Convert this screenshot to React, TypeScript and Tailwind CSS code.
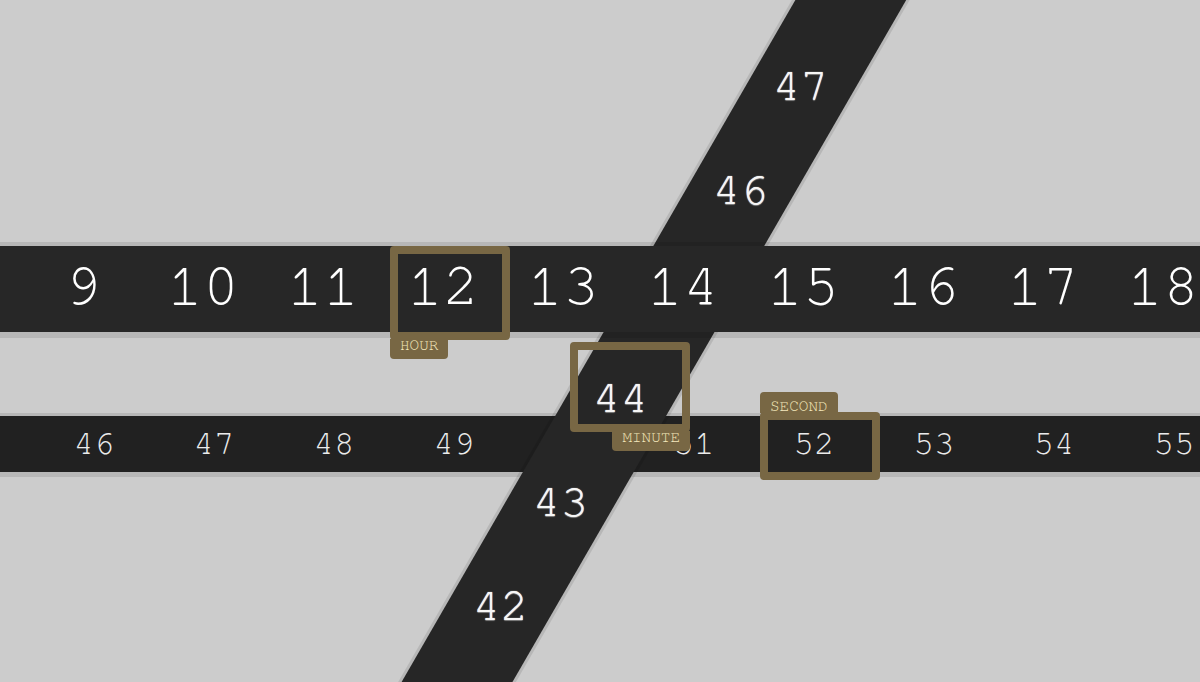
import React from 'react';

const range = (from: number, to: number) => {
  const out: number[] = [];
  if (from <= to) for (let i = from; i <= to; i++) out.push(i);
  else for (let i = from; i >= to; i--) out.push(i);
  return out;
};

const mono = "font-['Nimbus_Mono_PS','Nimbus_Mono_L','FreeMono','Courier','Liberation_Mono',monospace]";

export default function App() {
  const hours = range(8, 19);
  const seconds = range(45, 56);
  const minutes = range(49, 39);

  return (
    <div className={`relative w-[1200px] h-[682px] overflow-hidden bg-[#cccccc] ${mono}`}>
      {/* seconds strip */}
      <div className="absolute left-0 right-0 top-[416px] h-[56px] bg-[#212121] shadow-[0_1px_0_4px_rgba(0,0,0,0.1)]">
        <div className="flex h-full -ml-[86px]">
          {seconds.map((s) => (
            <div key={s} className="w-[120px] shrink-0 flex items-center justify-center text-[34px] text-[#ebebeb]">
              {s}
            </div>
          ))}
        </div>
      </div>

      {/* minutes strip, tilted */}
      <div className="absolute left-[573px] top-[-262px] w-[96px] h-[1320px] rotate-[30deg] bg-[#262626] shadow-[0_0_0_3px_rgba(0,0,0,0.1)]">
        <div className="flex flex-col h-full">
          {minutes.map((m) => (
            <div key={m} className="h-[120px] shrink-0 flex items-center justify-center">
              <span className="-rotate-[30deg] text-[46px] text-[#f6f6f6] [text-shadow:0_0_1px_#fff,0_1px_1px_rgba(255,255,255,0.35)]">
                {m}
              </span>
            </div>
          ))}
        </div>
      </div>

      {/* hours strip */}
      <div className="absolute left-0 right-0 top-[246px] h-[86px] bg-[#272727] shadow-[0_1px_0_5px_rgba(0,0,0,0.1)]">
        <div className="flex h-full -ml-[97px]">
          {hours.map((h) => (
            <div key={h} className="w-[120px] shrink-0 flex items-center justify-center pb-[6px] text-[60px] text-white">
              {h}
            </div>
          ))}
        </div>
      </div>

      {/* hour marker */}
      <div className="absolute left-[390px] top-[246px] flex flex-col items-start">
        <div className="w-[120px] h-[94px] border-[8px] border-[#786744] rounded-[4px]" />
        <div className="h-[20px] px-[10px] -mt-px bg-[#786744] rounded-b-[4px] text-[16px] leading-[12px] text-[#f5e9bd]">
          HOUR
        </div>
      </div>

      {/* minute marker */}
      <div className="absolute left-[570px] top-[342px] flex flex-col items-end">
        <div className="w-[120px] h-[90px] border-[8px] border-[#786744] rounded-[4px]" />
        <div className="h-[20px] px-[10px] -mt-px bg-[#786744] rounded-b-[4px] text-[16px] leading-[12px] text-[#f5e9bd]">
          MINUTE
        </div>
      </div>

      {/* second marker */}
      <div className="absolute left-[760px] top-[392px] flex flex-col items-start">
        <div className="h-[21px] px-[10px] pt-[8px] -mb-px bg-[#786744] rounded-t-[4px] text-[16px] leading-[12px] text-[#f5e9bd]">
          SECOND
        </div>
        <div className="w-[120px] h-[68px] border-[8px] border-[#786744] rounded-[4px]" />
      </div>
    </div>
  );
}
